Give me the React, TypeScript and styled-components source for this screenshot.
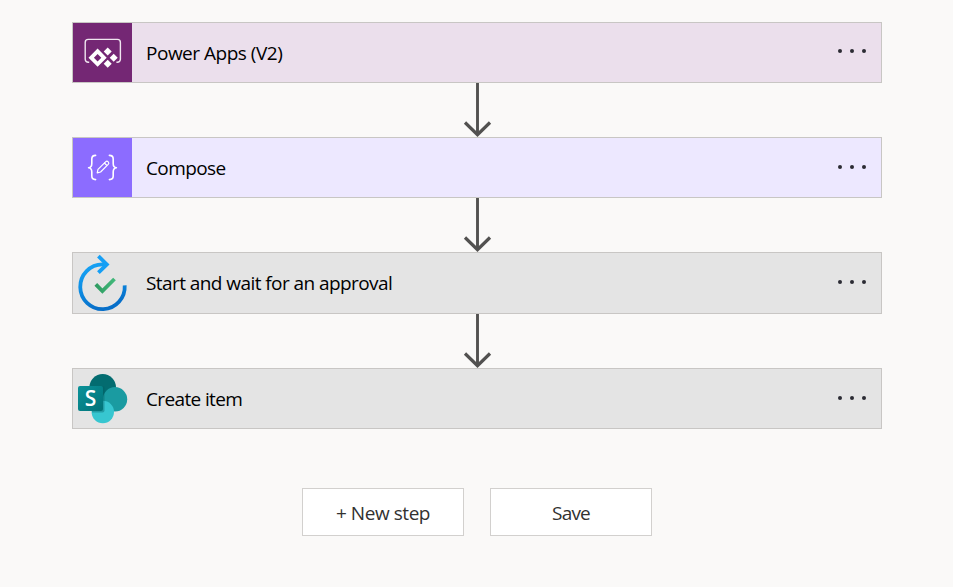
import React from "react";
import styled, { createGlobalStyle } from "styled-components";

const GlobalStyle = createGlobalStyle`
  * { box-sizing: border-box; }
  body { margin: 0; background: #faf9f8; }
`;

const Canvas = styled.main`
  width: 953px;
  height: 587px;
  padding: 22px 71px 0 72px;
  display: flex;
  flex-direction: column;
  background: #faf9f8;
  font-family: "Open Sans", "Noto Sans", sans-serif;
  overflow: hidden;
`;

const Card = styled.section<{ $bg: string; $height: number }>`
  display: flex;
  flex: none;
  height: ${(p) => p.$height}px;
  border: 1px solid #c8c6c4;
  background: ${(p) => p.$bg};
`;

const IconTile = styled.div<{ $bg: string }>`
  width: 59px;
  height: 100%;
  background: ${(p) => p.$bg};
  svg { display: block; }
`;

const Title = styled.span<{ $spacing: number }>`
  flex: 1;
  margin-left: 14px;
  padding-top: 17px;
  font-size: 19px;
  line-height: 26px;
  letter-spacing: ${(p) => p.$spacing}px;
  color: #000;
  white-space: nowrap;
`;

const MoreButton = styled.button<{ $lift: number }>`
  display: flex;
  align-self: center;
  gap: 7.6px;
  margin: 0 15.5px ${(p) => p.$lift}px 0;
  padding: 0;
  border: 0;
  background: none;
`;

const Dot = styled.i`
  width: 4px;
  height: 4px;
  border-radius: 50%;
  background: #2b2b33;
`;

const Connector = styled.div`
  flex: none;
  height: 54px;
  padding-left: 390px;
  svg { display: block; }
`;

const Actions = styled.footer`
  display: flex;
  gap: 26px;
  margin: 59px 0 0 230px;
`;

const ActionButton = styled.button<{ $spacing: number }>`
  width: 162px;
  height: 48px;
  padding: 1px 0 0;
  border: 1px solid #d2d0ce;
  background: #fff;
  color: #323130;
  font-family: inherit;
  font-size: 19px;
  line-height: 26px;
  letter-spacing: ${(p) => p.$spacing}px;
`;

const PowerAppsIcon = () => (
  <svg width="59" height="59" viewBox="0 0 59 59">
    <path d="M16.200 39.300h-.8a3.200 3.200 0 0 1-3.200-3V19.400a3 3 0 0 1 3-3h29.200a3 3 0 0 1 3 3v16.900a3.200 3.200 0 0 1-3.200 3h-.8" fill="none" stroke="#f0e6f0" strokeWidth="1.400" />
    <path fillRule="evenodd" fill="#fff" d="M24.600 25.600l9.100 9.100-9.100 9.100-9.100-9.100zM24.600 31l-3.700 3.700 3.700 3.700 3.700-3.700z" />
    <path fill="#fff" d="M34.700 24.600l4 4-4 4-4-4zM40.700 30.700l4 4-4 4-4-4zM34.700 36.800l4 4-4 4-4-4z" />
  </svg>
);

const ComposeIcon = () => (
  <svg width="59" height="59" viewBox="0 0 59 59" fill="none" stroke="#fff" strokeWidth="1.600" strokeLinecap="round" strokeLinejoin="round">
    <path d="M22.600 17.400c-2.700 0-3.800 1.200-3.800 3.600v4.400c0 2.400-.8 4-3.200 4.300 2.400.3 3.200 1.900 3.200 4.300v4c0 2.400 1.100 3.600 3.800 3.600M36.400 17.400c2.700 0 3.800 1.200 3.800 3.600v4.400c0 2.400.8 4 3.200 4.300-2.400.3-3.200 1.900-3.200 4.300v4c0 2.400-1.100 3.600-3.800 3.600" />
    <path strokeWidth="1.200" d="M24.200 34.900l.8-3.500 7.600-7.600a1.700 1.700 0 0 1 2.600 2.600l-7.600 7.600zM31.400 25l2.500 2.500" />
  </svg>
);

const ApprovalIcon = () => (
  <svg width="59" height="60" viewBox="0 0 59 60" fill="none">
    <defs>
      <linearGradient id="ring" x1="0" y1="0" x2="0.300" y2="1">
        <stop offset="0" stopColor="#18a4f6" />
        <stop offset="0.500" stopColor="#0d8ee4" />
        <stop offset="1" stopColor="#076fc9" />
      </linearGradient>
      <linearGradient id="tick" x1="0" y1="0" x2="1" y2="0">
        <stop offset="0" stopColor="#2e9b61" />
        <stop offset="1" stopColor="#41b87a" />
      </linearGradient>
    </defs>
    <path d="M33 11.400H29.500A22.250 22.400 0 1 0 51.700 32.400" stroke="url(#ring)" strokeWidth="3.800" />
    <path d="M25.400 3.200l8.400 8.200-8.400 8.200" stroke="#169ff5" strokeWidth="3.800" />
    <path d="M22.800 31.300l6.600 6.700 12.100-12" stroke="url(#tick)" strokeWidth="3.800" />
  </svg>
);

const SharePointMark = styled.div`
  display: grid;
  height: 59px;
  svg, span { grid-area: 1 / 1; }
  span {
    padding: 16px 0 0 5px;
    width: 30px;
    text-align: center;
    color: #fff;
    font: 600 21px/26px "Open Sans", sans-serif;
    z-index: 1;
  }
`;

const SharePointIcon = () => (
  <SharePointMark>
    <svg width="59" height="59" viewBox="0 0 59 59">
      <defs>
        <linearGradient id="sp" x1="0" y1="0" x2="1" y2="1">
          <stop offset="0" stopColor="#0a9299" />
          <stop offset="1" stopColor="#027277" />
        </linearGradient>
      </defs>
      <circle cx="29.700" cy="18.300" r="13.300" fill="#036c70" />
      <circle cx="42" cy="30.300" r="12.200" fill="#1a9ba1" />
      <circle cx="29.800" cy="43" r="11.200" fill="#37c6d0" />
      <path d="M19 17h10.500a2 2 0 0 1 2 2v22.500a2 2 0 0 1-2 2H19z" fill="#035b60" opacity=".38" />
      <rect x="5" y="17" width="25" height="25" rx="2" fill="url(#sp)" />
    </svg>
    <span>S</span>
  </SharePointMark>
);

const Arrow = () => (
  <Connector>
    <svg width="30" height="54" viewBox="0 0 30 54" fill="none" stroke="#525150">
      <path d="M15.500 0v51.500" strokeWidth="2.900" />
      <path d="M3 39.500l12.500 12.200L28 39.500" strokeWidth="3.200" />
    </svg>
  </Connector>
);

const steps = [
  { title: "Power Apps (V2)", bg: "#ebdfec", tile: "#742774", height: 61, lift: 3, spacing: -0.49, Icon: PowerAppsIcon },
  { title: "Compose", bg: "#ede8ff", tile: "#8c6cff", height: 61, lift: 1, spacing: -0.6, Icon: ComposeIcon },
  { title: "Start and wait for an approval", bg: "#e4e4e4", tile: "transparent", height: 62, lift: 2, spacing: -0.57, Icon: ApprovalIcon },
  { title: "Create item", bg: "#e4e4e4", tile: "transparent", height: 61, lift: 1, spacing: -0.63, Icon: SharePointIcon },
];

export default function App() {
  return (
    <>
      <GlobalStyle />
      <Canvas>
        {steps.map(({ title, bg, tile, height, lift, spacing, Icon }, i) => (
          <React.Fragment key={title}>
            {i > 0 && <Arrow />}
            <Card $bg={bg} $height={height}>
              <IconTile $bg={tile}><Icon /></IconTile>
              <Title $spacing={spacing}>{title}</Title>
              <MoreButton $lift={lift} aria-label="More"><Dot /><Dot /><Dot /></MoreButton>
            </Card>
          </React.Fragment>
        ))}
        <Actions>
          <ActionButton $spacing={-0.45}>+ New step</ActionButton>
          <ActionButton $spacing={-0.8}>Save</ActionButton>
        </Actions>
      </Canvas>
    </>
  );
}
